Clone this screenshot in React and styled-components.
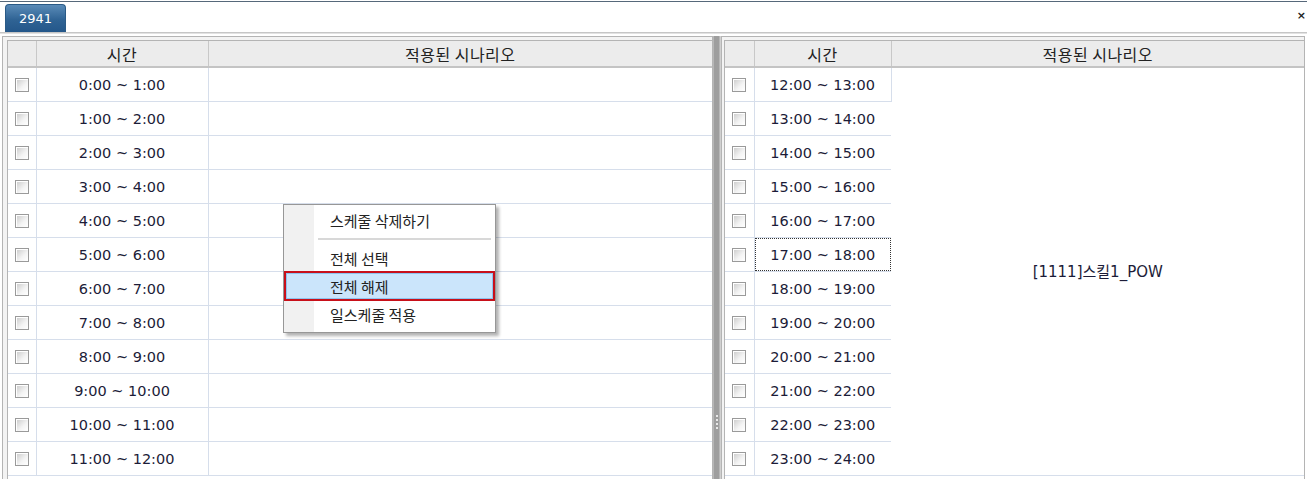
import React from 'react'
import styled, { createGlobalStyle } from 'styled-components'

const GlobalStyle = createGlobalStyle`
  html, body {
    margin: 0;
    padding: 0;
    background: #ffffff;
  }
  body {
    font-family: Tahoma, 'DejaVu Sans', 'Noto Sans CJK KR', sans-serif;
    font-size: 13px;
    color: #222;
  }
`

const Frame = styled.div`
  width: 1307px;
  height: 479px;
  overflow: hidden;
  border-top: 1px solid #56687a;
  box-sizing: border-box;
  margin-top: 1px;
  display: flex;
  flex-direction: column;
`

const TabBar = styled.div`
  height: 31px;
  display: flex;
  align-items: flex-end;
  justify-content: space-between;
  padding: 0 0 0 5px;
  border-bottom: 1px solid #c6c6c6;
  box-sizing: border-box;
`

const Tab = styled.div`
  width: 61px;
  height: 28px;
  border-radius: 4px 4px 0 0;
  background: linear-gradient(#5a8bb8, #2f6394 55%, #24578a);
  border: 1px solid #2a5a86;
  border-bottom: none;
  box-sizing: border-box;
  color: #fff;
  font-size: 13px;
  display: flex;
  align-items: center;
  justify-content: center;
`

const Close = styled.span`
  align-self: center;
  margin-right: 1px;
  font-weight: bold;
  font-size: 11px;
  color: #222;
  margin-top: -3px;
`

const Body = styled.div`
  flex: 1;
  display: flex;
  padding: 2px 2px 0 2px;
  border-top: 1px solid #e2e2e2;
  min-height: 0;
`

const Panel = styled.div`
  width: ${(p) => p.$width}px;
  flex: none;
  border: 1px solid #b4b4b4;
  border-bottom: none;
  padding: 3px 0 0 ${(p) => p.$pad}px;
  background: #f3f3f3;
  box-sizing: border-box;
  position: relative;
  display: flex;
`

const Inner = styled.div`
  flex: 1;
  border-left: 1px solid #b4b4b4;
  border-top: 1px solid #b4b4b4;
  background: #fff;
`

const Splitter = styled.div`
  width: 8px;
  flex: none;
  background: linear-gradient(90deg, #d0d0d0 0, #9e9e9e 1px, #9e9e9e 6px, #d0d0d0 7px);
  display: flex;
  flex-direction: column;
  align-items: center;
  justify-content: flex-end;
  padding-bottom: 51px;
  gap: 2px;
  box-sizing: border-box;
`

const Dot = styled.i`
  width: 2px;
  height: 2px;
  background: #e8e8e8;
  display: block;
`

const Table = styled.table`
  border-collapse: collapse;
  table-layout: fixed;
  width: 100%;
`

const Th = styled.th`
  height: 25px;
  padding: 0;
  background: #ececec;
  border-right: 1px solid #c8c8c8;
  border-bottom: 2px solid #c4c4c4;
  font-weight: normal;
  color: #222;
  font-family: 'Noto Sans CJK KR', sans-serif;
  font-size: 16px;
  letter-spacing: 0.5px;
  text-align: center;
  &:last-child {
    border-right: none;
  }
`

const Td = styled.td`
  height: 33px;
  padding: 0;
  border-right: 1px solid #d6deeb;
  border-bottom: 1px solid #d6deeb;
  text-align: center;
  font-size: 14.5px;
  color: #1c1c38;
  position: relative;
  &:last-child {
    border-right: none;
  }
`

const ScenarioCell = styled(Td)`
  vertical-align: middle;
  font-family: Tahoma, 'DejaVu Sans', 'Noto Sans CJK KR', sans-serif;
  font-size: 15px;
  padding-bottom: 2px;
`

const Focus = styled.span`
  position: absolute;
  inset: 0;
  border: 1px dotted #333;
`

const Check = styled.span`
  display: inline-block;
  width: 12px;
  height: 12px;
  border: 1px solid #9a9a9a;
  background: linear-gradient(135deg, #c9c9c9, #f4f4f4 60%, #ffffff);
  box-shadow: inset 1px 1px 0 #fff;
  vertical-align: middle;
  margin-top: -2px;
`

const Menu = styled.div`
  position: absolute;
  left: 280px;
  top: 167px;
  width: 213px;
  padding: 1px 2px 4px;
  background: linear-gradient(90deg, #f1f1f1 0, #f1f1f1 30px, #fff 30px);
  border: 1px solid #979797;
  box-shadow: 3px 3px 3px rgba(0, 0, 0, 0.3);
  font-family: 'Noto Sans CJK KR', sans-serif;
  font-size: 15px;
  color: #222;
  box-sizing: border-box;
  z-index: 5;
`

const MenuItem = styled.div`
  height: ${(p) => (p.$active ? 30 : 28)}px;
  display: flex;
  align-items: center;
  padding-left: ${(p) => (p.$active ? 44 : 42)}px;
  box-sizing: border-box;
  border: 2px solid ${(p) => (p.$active ? '#c8101a' : 'transparent')};
  background: ${(p) => (p.$active ? '#cbe5fb' : 'transparent')};
  box-shadow: ${(p) => (p.$active ? 'inset 0 0 0 1px #8ec3ee' : 'none')};
  margin: ${(p) => (p.$active ? '-1px -2px' : '0')};
`

const Separator = styled.div`
  height: 2px;
  margin: 4px 2px 3px 32px;
  background: #d8d8d8;
  border-bottom: 1px solid #fff;
`

const leftRows = Array.from({ length: 12 }, (_, i) => `${i}:00 ~ ${i + 1}:00`)
const rightRows = Array.from({ length: 12 }, (_, i) => `${i + 12}:00 ~ ${i + 13}:00`)

const Grid = ({ rows, checkWidth, timeWidth, merged, focusIndex }) => (
  <Inner>
    <Table>
      <colgroup>
        <col style={{ width: checkWidth }} />
        <col style={{ width: timeWidth }} />
        <col />
      </colgroup>
      <thead>
        <tr>
          <Th />
          <Th>시간</Th>
          <Th>적용된 시나리오</Th>
        </tr>
      </thead>
      <tbody>
        {rows.map((label, i) => (
          <tr key={label}>
            <Td>
              <Check />
            </Td>
            <Td>
              {label}
              {i === focusIndex && <Focus />}
            </Td>
            {merged ? (
              i === 0 && <ScenarioCell rowSpan={rows.length}>{merged}</ScenarioCell>
            ) : (
              <Td />
            )}
          </tr>
        ))}
      </tbody>
    </Table>
  </Inner>
)

export default function App() {
  return (
    <>
      <GlobalStyle />
      <Frame>
        <TabBar>
          <Tab>2941</Tab>
          <Close>×</Close>
        </TabBar>
        <Body>
          <Panel $width={711} $pad={4}>
            <Grid rows={leftRows} checkWidth={28} timeWidth={172} />
            <Menu>
              <MenuItem>스케줄 삭제하기</MenuItem>
              <Separator />
              <MenuItem>전체 선택</MenuItem>
              <MenuItem $active>전체 해제</MenuItem>
              <MenuItem>일스케줄 적용</MenuItem>
            </Menu>
          </Panel>
          <Splitter>
            <Dot />
            <Dot />
            <Dot />
            <Dot />
          </Splitter>
          <Panel $width={584} $pad={2}>
            <Grid
              rows={rightRows}
              checkWidth={29}
              timeWidth={137}
              merged="[1111]스킬1_POW"
              focusIndex={5}
            />
          </Panel>
        </Body>
      </Frame>
    </>
  )
}
